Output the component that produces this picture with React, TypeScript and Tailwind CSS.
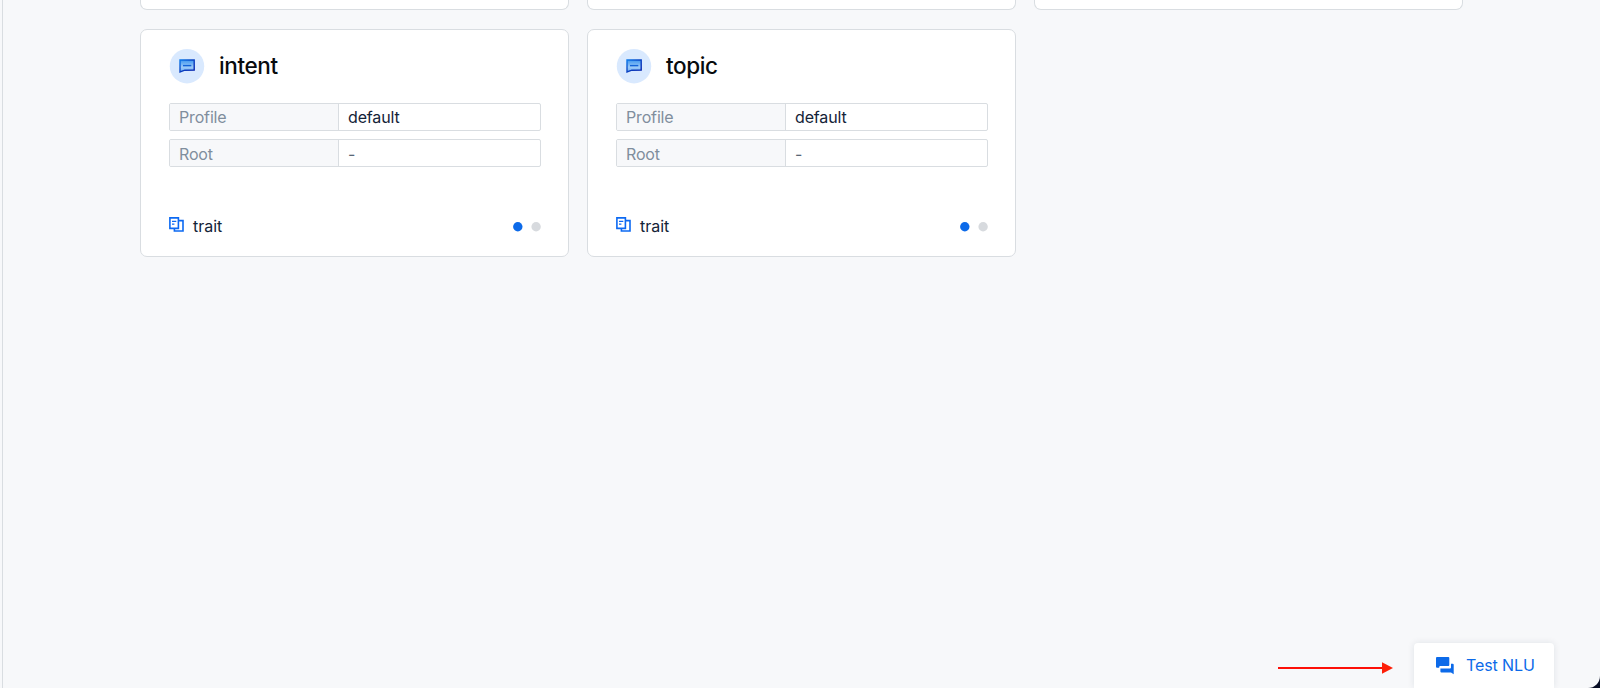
function MessageBadge() {
  return (
    <svg className="h-[35px] w-[36px] shrink-0" viewBox="0 0 36 35">
      <defs>
        <linearGradient id="fill" x1="0" y1="0" x2="0" y2="1">
          <stop offset="0" stopColor="#3f97ef" />
          <stop offset="0.6" stopColor="#9ccaf8" />
          <stop offset="1" stopColor="#6db0f3" />
        </linearGradient>
        <linearGradient id="edge" x1="0" y1="0" x2="1" y2="1">
          <stop offset="0" stopColor="#0a78ea" />
          <stop offset="0.45" stopColor="#0b45c4" />
          <stop offset="1" stopColor="#0520ac" />
        </linearGradient>
      </defs>
      <circle cx="18" cy="17.2" r="17.2" fill="#d9e9fe" />
      <path d="M11 11H25.2V21L15.8 21.2L11 23Z" fill="url(#fill)" stroke="url(#edge)" strokeWidth="1.4" />
      <path d="M14 16.6H22.3" stroke="#1263d8" strokeWidth="1.4" />
    </svg>
  );
}

function TraitIcon() {
  return (
    <svg className="size-[15px] shrink-0" viewBox="0 0 15 15" fill="none" stroke="#0c69f2" strokeWidth="1.6">
      <path d="M0.9 0.9H9.4V11.4H0.9Z" />
      <path d="M9.4 3.6H14V14H5.4V11.4" />
      <path d="M3 4.4H7.3M3 7.2H5.4" strokeWidth="1.3" />
    </svg>
  );
}

function Field({ label, value, muted }: { label: string; value: string; muted?: boolean }) {
  return (
    <div className="flex h-[28px] overflow-hidden rounded-[2px] border border-[#d9dde1] text-[16px] leading-[27px] tracking-[-0.15px]">
      <div className={muted ? "w-[169px] border-r border-[#d9dde1] bg-[#f7f8fa] pt-[1px] pl-[9px] text-[#808e9d]" : "w-[169px] border-r border-[#d9dde1] bg-[#f7f8fa] pl-[9px] text-[#808e9d]"}>
        {label}
      </div>
      <div className={muted ? "pt-[1px] pl-[9px] text-[#5a6675]" : "pl-[9px] text-[#142338]"}>{value}</div>
    </div>
  );
}

function EntityCard({ name }: { name: string }) {
  return (
    <section className="flex h-[228px] w-[429px] flex-col rounded-[7px] border border-[#d9dde1] bg-white pt-[19px] pr-[27px] pl-[28px]">
      <header className="flex items-center gap-[14px]">
        <MessageBadge />
        <h2 className="-mt-[1px] text-[22.5px] leading-[34px] font-medium tracking-[-0.4px] text-[#080b0e]">{name}</h2>
      </header>
      <div className="mt-[19px] flex flex-col gap-[8px]">
        <Field label="Profile" value="default" />
        <Field label="Root" value="-" muted />
      </div>
      <footer className="mt-[47px] flex h-[24px] items-center">
        <div className="mb-[4px]">
          <TraitIcon />
        </div>
        <span className="ml-[9px] text-[16px] leading-[24px] text-[#142338]">trait</span>
        <svg className="mt-[2px] ml-auto h-[10px] w-[28px]" viewBox="0 0 28 10">
          <circle cx="4.8" cy="4.8" r="4.7" fill="#0c6ae9" />
          <circle cx="23.1" cy="4.8" r="4.7" fill="#d7dade" />
        </svg>
      </footer>
    </section>
  );
}

export default function App() {
  return (
    <div className="h-[688px] w-[1600px] overflow-hidden bg-[#080d25] font-['Inter',sans-serif]">
      <main className="relative flex h-full flex-col overflow-hidden rounded-br-[12px] bg-[#f7f8fa]">
        <div className="absolute inset-y-0 left-0 w-[3px] border-r border-[#d9dde1]" />
        <div className="ml-[140px] flex gap-[18px]">
          <div className="h-[10px] w-[429px] rounded-b-[7px] border border-t-0 border-[#d9dde1] bg-white" />
          <div className="h-[10px] w-[429px] rounded-b-[7px] border border-t-0 border-[#d9dde1] bg-white" />
          <div className="h-[10px] w-[429px] rounded-b-[7px] border border-t-0 border-[#d9dde1] bg-white" />
        </div>
        <div className="mt-[19px] ml-[140px] flex gap-[18px]">
          <EntityCard name="intent" />
          <EntityCard name="topic" />
        </div>
        <div className="mt-auto mr-[46px] flex items-end justify-end">
          <svg className="mr-[21px] mb-[14px] h-[12px] w-[115px]" viewBox="0 0 115 12">
            <path d="M0 6H106" stroke="#fd1008" strokeWidth="2" />
            <path d="M104 0.3L115 6L104 11.7Z" fill="#fd1f08" />
          </svg>
          <button className="flex h-[45px] w-[140px] rounded-t-[4px] bg-white pt-[12px] pl-[22px] text-[#0c6ae9] shadow-[0_0_7px_rgba(20,35,56,0.1)]">
            <svg className="mt-[1.5px] size-[18px]" viewBox="0 0 18 18" fill="currentColor">
              <path d="M1 0H12.3Q13.3 0 13.3 1V8Q13.3 9 12.3 9H4.2Q3.2 9 3.2 10V10.8H1Q0 10.8 0 9.8V1Q0 0 1 0Z" />
              <path d="M15 6.8H16.7Q17.7 6.8 17.7 7.8V17.3L15 15.4H5.4Q4.4 15.4 4.4 14.4V11.4H14Q15 11.4 15 10.4Z" />
            </svg>
            <span className="ml-[12px] text-[16px] leading-[20px] tracking-[-0.1px]">Test NLU</span>
          </button>
        </div>
      </main>
    </div>
  );
}
